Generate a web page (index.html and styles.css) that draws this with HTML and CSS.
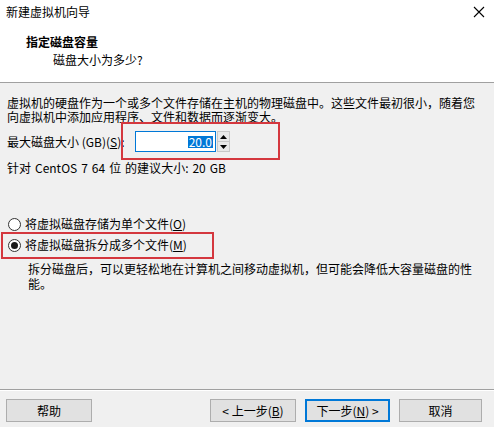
FILE: index.html
```html
<!DOCTYPE html>
<html lang="zh-CN">
<head>
<meta charset="utf-8">
<title>新建虚拟机向导</title>
<link rel="stylesheet" href="styles.css">
</head>
<body>
<div class="window">
  <div class="top">
    <div class="titlebar">
      <span class="title">新建虚拟机向导</span>
      <svg class="close" width="12" height="12" viewBox="0 0 12 12"><path d="M1 1 L11 11 M11 1 L1 11" stroke="#000" stroke-width="1.1" fill="none"/></svg>
    </div>
    <div class="header">
      <div class="h-title">指定磁盘容量</div>
      <div class="h-sub">磁盘大小为多少?</div>
    </div>
  </div>

  <div class="content">
    <div class="intro">
      <div class="line">虚拟机的硬盘作为一个或多个文件存储在主机的物理磁盘中。这些文件最初很小，随着您</div>
      <div class="line">向虚拟机中添加应用程序、文件和数据而逐渐变大。</div>
    </div>

    <div class="size-row">
      <label class="size-label">最大磁盘大小 (GB)(<u>S</u>):</label>
      <div class="spin">
        <div class="spin-input"><span class="sel">20.0</span></div>
        <div class="spin-btns">
          <div class="spin-btn"><svg width="7" height="4" viewBox="0 0 7 4"><path d="M0 4 L3.5 0 L7 4 Z" fill="#000"/></svg></div>
          <div class="spin-btn"><svg width="7" height="4" viewBox="0 0 7 4"><path d="M0 0 L3.5 4 L7 0 Z" fill="#000"/></svg></div>
        </div>
      </div>
      <div class="mark mark-size"></div>
    </div>

    <p class="recommend">针对 CentOS 7 64 位 的建议大小: 20 GB</p>

    <div class="radio-row first">
      <span class="radio"></span>
      <span>将虚拟磁盘存储为单个文件(<u>O</u>)</span>
    </div>
    <div class="radio-row second">
      <span class="radio checked"></span>
      <span>将虚拟磁盘拆分成多个文件(<u>M</u>)</span>
      <div class="mark mark-radio"></div>
    </div>
    <div class="desc">
      <div class="line">拆分磁盘后，可以更轻松地在计算机之间移动虚拟机，但可能会降低大容量磁盘的性</div>
      <div class="line">能。</div>
    </div>
  </div>

  <div class="footer">
    <button class="btn btn-help">帮助</button>
    <div class="spacer"></div>
    <button class="btn btn-back">&lt; 上一步(<u>B</u>)</button>
    <button class="btn btn-next">下一步(<u>N</u>) &gt;</button>
    <button class="btn btn-cancel">取消</button>
  </div>
</div>
</body>
</html>
```

FILE: styles.css
```css
html, body {
  margin: 0;
  padding: 0;
}
body {
  font-family: "Noto Sans CJK SC", "Noto Sans", sans-serif;
  font-size: 12px;
  color: #000;
  background: #f0f0f0;
}
.window {
  width: 494px;
  height: 427px;
  display: flex;
  flex-direction: column;
  background: #f0f0f0;
}
.top {
  background: #fff;
  border-bottom: 1px solid #a0a0a0;
}
.titlebar {
  height: 24px;
  display: flex;
  align-items: center;
  justify-content: space-between;
  padding: 0 9px 0 6px;
}
.title {
  line-height: 24px;
  color: #000;
}
.close {
  display: block;
}
.header {
  padding: 10px 0 14px 0;
  height: 34px;
}
.h-title {
  font-weight: bold;
  line-height: 16px;
  padding-left: 26px;
}
.h-sub {
  line-height: 16px;
  margin-top: 2px;
  padding-left: 53px;
}
.content {
  padding: 0 7px;
}
.intro {
  margin-top: 13px;
  white-space: nowrap;
}
.intro .line {
  height: 14px;
  line-height: 14px;
}
.size-row {
  position: relative;
  display: flex;
  align-items: center;
  height: 21px;
  margin-top: 7px;
}
.size-label {
  width: 128px;
  line-height: 14px;
}
.spin {
  display: flex;
  height: 21px;
}
.spin-input {
  width: 77px;
  height: 19px;
  border: 1px solid #0078d7;
  background: #fff;
  display: flex;
  align-items: center;
  justify-content: flex-end;
  padding-right: 2px;
  box-sizing: content-box;
}
.sel {
  background: #0078d7;
  color: #fff;
  line-height: 12px;
  height: 12px;
  padding: 0 1px;
  font-size: 12px;
}
.spin-btns {
  display: flex;
  flex-direction: column;
  width: 13px;
  height: 21px;
  margin-left: 1px;
}
.spin-btn {
  flex: 1;
  background: #e8e8e8;
  border: 1px solid #c8c8c8;
  display: flex;
  align-items: center;
  justify-content: center;
}
.spin-btn + .spin-btn {
  border-top: none;
}
.spin-btn svg {
  display: block;
}
.mark {
  position: absolute;
  border: 2px solid #d4373e;
  box-sizing: border-box;
  pointer-events: none;
}
.mark-size {
  left: 114px;
  top: -9px;
  width: 159px;
  height: 38px;
}
.recommend {
  margin: 9px 0 0 0;
  line-height: 14px;
  word-spacing: 1.3px;
}
.radio-row {
  position: relative;
  display: flex;
  align-items: center;
  height: 16px;
  line-height: 16px;
}
.radio-row.first {
  margin-top: 41px;
}
.radio-row.second {
  margin-top: 5px;
}
.radio {
  width: 11px;
  height: 11px;
  border: 1px solid #333;
  border-radius: 50%;
  background: #fff;
  margin: 0 4px 0 1px;
  flex: none;
  display: flex;
  align-items: center;
  justify-content: center;
}
.radio.checked::after {
  content: "";
  width: 7px;
  height: 7px;
  border-radius: 50%;
  background: #1a1a1a;
}
.mark-radio {
  left: -6px;
  top: -5px;
  width: 213px;
  height: 27px;
}
.desc {
  margin: 8px 0 0 21px;
  white-space: nowrap;
}
.desc .line {
  height: 15px;
  line-height: 15px;
}
.footer {
  margin-top: auto;
  border-top: 1px solid #a0a0a0;
  box-shadow: inset 0 1px 0 #fff;
  height: 38px;
  display: flex;
  align-items: flex-start;
  padding: 9px 12px 0 6px;
  box-sizing: border-box;
}
.spacer {
  flex: 1;
}
.btn {
  font-family: inherit;
  font-size: 12px;
  height: 23px;
  background: #e1e1e1;
  border: 1px solid #adadad;
  color: #000;
  padding: 0;
  margin: 0;
  line-height: 19px;
}
.btn-help {
  width: 86px;
}
.btn-back {
  width: 86px;
}
.btn-next {
  width: 85px;
  margin-left: 9px;
  border: 2px solid #0078d7;
}
.btn-cancel {
  width: 83px;
  margin-left: 9px;
}
```
